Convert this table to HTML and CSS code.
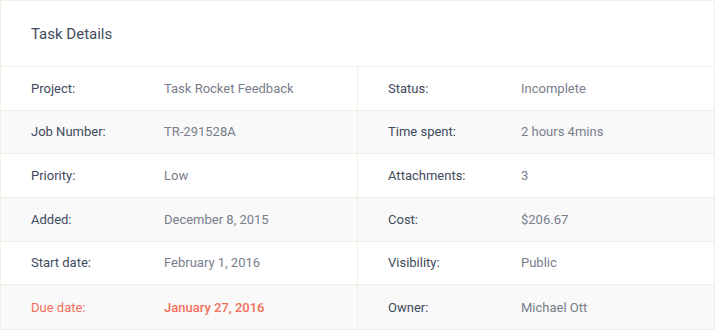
FILE: index.html
```html
<!DOCTYPE html>
<html>
<head>
<meta charset="utf-8">
<link rel="stylesheet" href="styles.css">
</head>
<body>
<div class="card">
  <div class="card-header">Task Details</div>
  <div class="grid">
    <div class="row">
      <div class="cell"><span class="label">Project:</span><span class="value">Task Rocket Feedback</span></div>
      <div class="cell"><span class="label">Status:</span><span class="value">Incomplete</span></div>
    </div>
    <div class="row alt">
      <div class="cell"><span class="label">Job Number:</span><span class="value">TR-291528A</span></div>
      <div class="cell"><span class="label">Time spent:</span><span class="value">2 hours 4mins</span></div>
    </div>
    <div class="row">
      <div class="cell"><span class="label">Priority:</span><span class="value">Low</span></div>
      <div class="cell"><span class="label">Attachments:</span><span class="value">3</span></div>
    </div>
    <div class="row alt">
      <div class="cell"><span class="label">Added:</span><span class="value">December 8, 2015</span></div>
      <div class="cell"><span class="label">Cost:</span><span class="value">$206.67</span></div>
    </div>
    <div class="row">
      <div class="cell"><span class="label">Start date:</span><span class="value">February 1, 2016</span></div>
      <div class="cell"><span class="label">Visibility:</span><span class="value">Public</span></div>
    </div>
    <div class="row alt">
      <div class="cell danger"><span class="label">Due date:</span><span class="value">January 27, 2016</span></div>
      <div class="cell"><span class="label">Owner:</span><span class="value">Michael Ott</span></div>
    </div>
  </div>
</div>
</body>
</html>
```
FILE: styles.css
```css
html, body {
  margin: 0;
  padding: 0;
  background: #ffffff;
}
body {
  font-family: Roboto, "Liberation Sans", sans-serif;
  width: 715px;
  height: 330px;
}
.card {
  box-sizing: border-box;
  width: 715px;
  height: 330px;
  border: 1px solid #f0f0e4;
  background: #fff;
  display: flex;
  flex-direction: column;
}
.card-header {
  height: 66px;
  flex: none;
  box-sizing: border-box;
  padding: 0 30px;
  display: flex;
  align-items: center;
  font-size: 15px;
  color: #3f4a5c;
  border-bottom: 1px solid #f0f0e4;
}
.grid {
  flex: 1;
  display: grid;
  grid-auto-rows: 1fr;
}
.row {
  display: grid;
  grid-template-columns: 357px 1fr;
  box-sizing: border-box;
  border-bottom: 1px solid #f0f0e4;
}
.row:last-child {
  border-bottom: none;
}
.row.alt {
  background: #f9f9f9;
}
.cell {
  display: flex;
  align-items: center;
  padding-left: 30px;
  font-size: 13px;
}
.cell:first-child {
  border-right: 1px solid #f0f0e4;
}
.label {
  width: 133px;
  flex: none;
  color: #3f4a5c;
}
.value {
  color: #787e8c;
  font-weight: 400;
}
.danger .label {
  color: #f56e5c;
}
.danger .value {
  color: #f56e5c;
  font-weight: 500;
}
```
